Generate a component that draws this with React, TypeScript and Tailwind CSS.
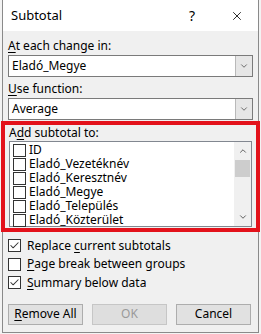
import { X, ChevronDown, ChevronUp, Check } from "lucide-react";

const font = { fontFamily: '"Noto Sans", "Open Sans", sans-serif' };

function Acc({ k }: { k: string }) {
  return <span className="underline underline-offset-2">{k}</span>;
}

function Box({ checked }: { checked?: boolean }) {
  return (
    <span className="flex h-[13px] w-[13px] shrink-0 items-center justify-center border border-[#333] bg-white">
      {checked && <Check className="h-[11px] w-[11px] text-[#333]" strokeWidth={2.2} />}
    </span>
  );
}

function Select({ value }: { value: string }) {
  return (
    <div className="flex h-[22px] items-stretch border border-[#7a7a7a] bg-white">
      <div className="flex flex-1 items-center pl-[3px] text-[12px] text-black">{value}</div>
      <div className="flex w-[17px] items-center justify-center border-l border-[#b9b9b9] bg-[#e6e6e6]">
        <ChevronDown className="h-[10px] w-[10px] text-[#555]" strokeWidth={2} />
      </div>
    </div>
  );
}

const fields = [
  "ID",
  "Eladó_Vezetéknév",
  "Eladó_Keresztnév",
  "Eladó_Megye",
  "Eladó_Település",
  "Eladó_Közterület",
];

const options: [React.ReactNode, boolean][] = [
  [<>Replace <Acc k="c" />urrent subtotals</>, true],
  [<><Acc k="P" />age break between groups</>, false],
  [<><Acc k="S" />ummary below data</>, true],
];

export default function App() {
  return (
    <div className="h-[334px] w-[261px] bg-[#f3f3f3] pl-[2px] pt-0" style={font}>
      <div className="flex h-[333px] w-[257px] flex-col border border-t-0 border-[#8a8a8a] bg-[#f0f0f0]">
        <div className="flex h-[31px] items-center bg-white pl-[8px]">
          <span className="text-[13px] text-black">Subtotal</span>
          <span className="ml-auto mr-[35px] text-[14px] text-black">?</span>
          <X className="mr-[14px] h-[14px] w-[14px] text-black" strokeWidth={1.4} />
        </div>

        <div className="flex flex-col px-[5px] pt-[6px] text-[12px] text-black">
          <div className="h-[17px] leading-[17px]"><Acc k="A" />t each change in:</div>
          <div className="mt-[1px]"><Select value="Eladó_Megye" /></div>
          <div className="mt-[3px] h-[17px] leading-[17px]"><Acc k="U" />se function:</div>
          <div className="mt-[1px]"><Select value="Average" /></div>
        </div>

        <div className="-mx-[2px] mt-[1px] flex flex-col border-4 border-[#e3121b] px-[4px] pb-[1px] text-[12px] text-black">
          <div className="h-[15px] leading-[15px]">A<Acc k="d" />d subtotal to:</div>
          <div className="mt-[1px] flex h-[86px] border border-[#828790] bg-white">
            <div className="flex flex-1 flex-col pl-[3px] pt-[1px]">
              {fields.map((f) => (
                <div key={f} className="flex h-[14.4px] items-center gap-[3px] leading-[14px]">
                  <Box />
                  <span>{f}</span>
                </div>
              ))}
            </div>
            <div className="flex w-[17px] flex-col items-center bg-[#f0f0f0]">
              <ChevronUp className="mt-[4px] h-[10px] w-[10px] text-[#606060]" strokeWidth={2.4} />
              <div className="mt-[4px] h-[17px] w-[15px] bg-[#cdcdcd]" />
              <ChevronDown className="mt-auto mb-[4px] h-[10px] w-[10px] text-[#606060]" strokeWidth={2.4} />
            </div>
          </div>
        </div>

        <div className="flex flex-col gap-[5px] px-[5px] pt-[7px] text-[12px] text-black">
          {options.map(([label, on], i) => (
            <div key={i} className="flex h-[13.5px] items-center gap-[6px] leading-[14px]">
              <Box checked={on} />
              <span>{label}</span>
            </div>
          ))}
        </div>

        <div className="mt-[14px] flex gap-[9px] px-[5px] text-[12px]">
          <button className="h-[21px] w-[75px] border border-[#adadad] bg-[#e1e1e1] text-black">
            <Acc k="R" />emove All
          </button>
          <button disabled className="h-[21px] w-[75px] border border-[#c6c6c6] bg-[#dedede] text-[#9a9a9a]">
            OK
          </button>
          <button className="h-[21px] w-[75px] border border-[#adadad] bg-[#e1e1e1] text-black">
            Cancel
          </button>
        </div>
      </div>
    </div>
  );
}
